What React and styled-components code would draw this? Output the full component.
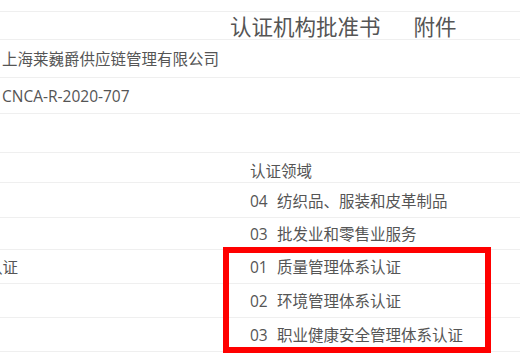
import React from 'react'
import styled, { createGlobalStyle } from 'styled-components'

const Global = createGlobalStyle`
  html, body {
    margin: 0;
    padding: 0;
    background: #fff;
    overflow: hidden;
  }
  body {
    font-family: "Open Sans", "Noto Sans CJK SC", sans-serif;
    color: #555;
  }
`

const Page = styled.div`
  position: relative;
  width: 520px;
  height: 354px;
  padding-top: 11px;
  box-sizing: border-box;
  overflow: hidden;
`

const Row = styled.div`
  display: grid;
  grid-template-columns: 230px 1fr;
  align-items: center;
  box-sizing: border-box;
  height: ${(p) => p.h}px;
  border-top: 1px solid #efefef;
  font-size: 15.5px;
`

const LeftCell = styled.div`
  padding-left: 2px;
  margin-left: ${(p) => p.shift || 0}px;
  white-space: nowrap;
  padding-top: ${(p) => p.dy || 0}px;
`

const RightCell = styled.div`
  padding-left: 20px;
  white-space: nowrap;
  padding-top: ${(p) => p.dy || 0}px;
`

const Title = styled.div`
  grid-column: 2;
  display: flex;
  gap: 33px;
  font-size: 21.5px;
  line-height: 1;
  padding-top: 1px;
  font-family: "Noto Sans CJK SC", sans-serif;
`

const Num = styled.span`
  display: inline-block;
  width: 27px;
`

const Highlight = styled.div`
  position: absolute;
  left: 223px;
  top: 247px;
  width: 268px;
  height: 106px;
  box-sizing: border-box;
  border: 6px solid #ff0000;
  pointer-events: none;
`

const scopes = [
  ['04', '纺织品、服装和皮革制品', 35],
  ['03', '批发业和零售业服务', 32],
]

const systems = [
  ['01', '质量管理体系认证', '认证'],
  ['02', '环境管理体系认证', ''],
  ['03', '职业健康安全管理体系认证', ''],
]

export default function App() {
  return (
    <>
      <Global />
      <Page>
        <Row h={28}>
          <Title>
            <span>认证机构批准书</span>
            <span>附件</span>
          </Title>
        </Row>
        <Row h={38}>
          <LeftCell>上海莱巍爵供应链管理有限公司</LeftCell>
        </Row>
        <Row h={36}>
          <LeftCell>CNCA-R-2020-707</LeftCell>
        </Row>
        <Row h={39} />
        <Row h={30}>
          <div />
          <RightCell dy={6}>认证领域</RightCell>
        </Row>
        {scopes.map(([n, t, h]) => (
          <Row key={t} h={h}>
            <div />
            <RightCell>
              <Num>{n}</Num>
              {t}
            </RightCell>
          </Row>
        ))}
        {systems.map(([n, t, left]) => (
          <Row key={t} h={34}>
            <LeftCell shift={-15}>{left}</LeftCell>
            <RightCell>
              <Num>{n}</Num>
              {t}
            </RightCell>
          </Row>
        ))}
        <Row h={3} />
        <Highlight />
      </Page>
    </>
  )
}
